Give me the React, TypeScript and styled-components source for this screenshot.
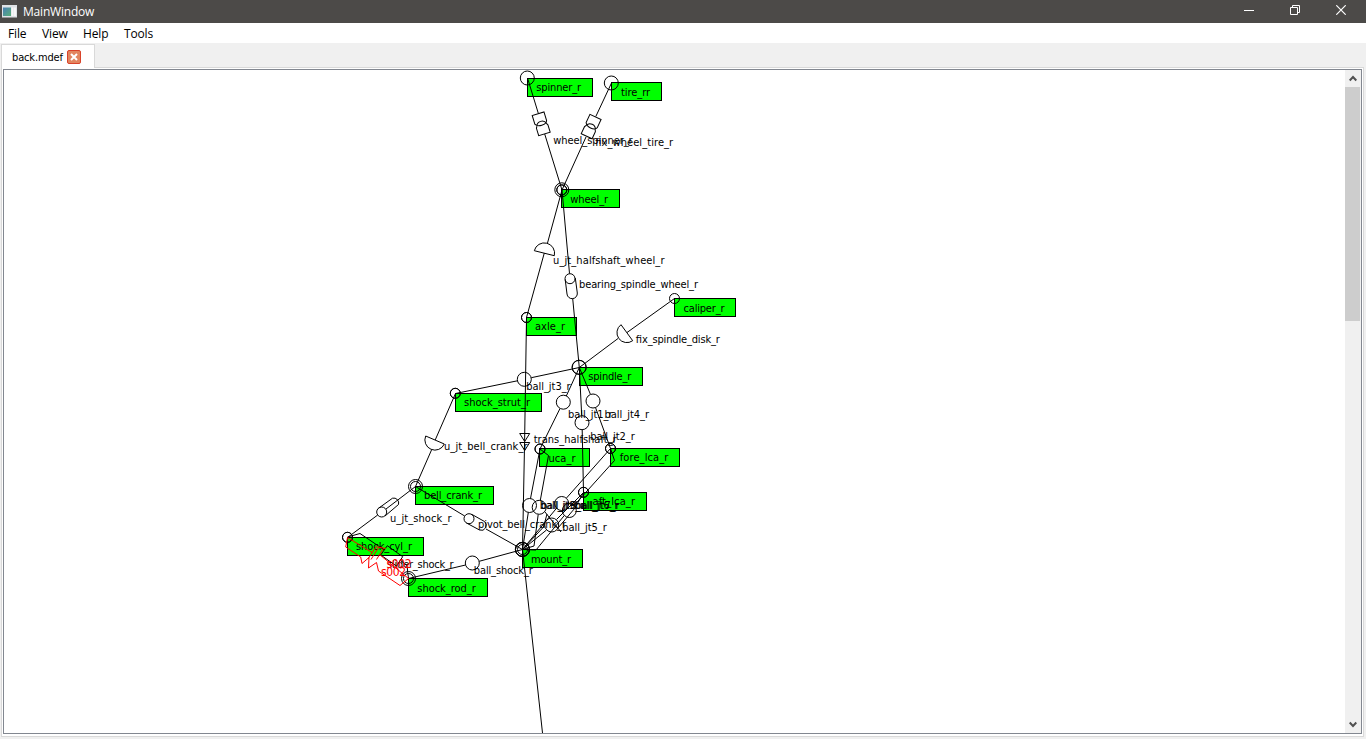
import React from "react";
import styled, { createGlobalStyle } from "styled-components";

const GlobalStyle = createGlobalStyle`
  html, body { margin: 0; padding: 0; overflow: hidden; }
  * { box-sizing: border-box; }
`;

const uiFont = `"Open Sans", "Noto Sans", sans-serif`;
const labelFont = `"DejaVu Sans Condensed", "DejaVu Sans", sans-serif`;

const Window = styled.div`
  width: 1366px;
  height: 739px;
  display: flex;
  flex-direction: column;
  background: #f0f0f0;
  color: #000;
  font-family: ${uiFont};
  font-size: 12px;
`;

const TitleBar = styled.header`
  height: 23px;
  flex: none;
  display: flex;
  align-items: center;
  background: #4c4a48;
  color: #fff;
  padding: 0 2px;
`;

const AppIcon = styled.svg`
  width: 15px;
  height: 13px;
  flex: none;
`;

const Title = styled.span`
  margin-left: 6px;
  flex: 1;
  line-height: 23px;
  letter-spacing: -0.2px;
`;

const Controls = styled.div`
  display: flex;
  height: 100%;
`;

const ControlButton = styled.button`
  width: 46px;
  height: 20px;
  padding: 0;
  border: 0;
  background: transparent;
  display: flex;
  align-items: center;
  justify-content: center;
`;

const MenuBar = styled.nav`
  height: 20px;
  flex: none;
  display: flex;
  background: #fff;
  padding-left: 8px;
`;

const MenuItem = styled.span<{ $w: number }>`
  width: ${(p) => p.$w}px;
  line-height: 21px;
  letter-spacing: -0.15px;
`;

const TabStrip = styled.div`
  height: 24px;
  flex: none;
  display: flex;
  align-items: flex-end;
  padding: 1px 0 0 1px;
`;

const Tab = styled.div`
  width: 94px;
  height: 24px;
  flex: none;
  display: flex;
  align-items: center;
  padding: 1px 0 0 10px;
  background: #fff;
  border: 1px solid #d9d9d9;
  border-bottom: 0;
  margin-bottom: -1px;
  position: relative;
  z-index: 1;
`;

const TabLabel = styled.svg`
  width: 55px;
  height: 18px;
  flex: none;
  font: 11px ${labelFont};
`;

const TabClose = styled.button`
  width: 14px;
  height: 14px;
  padding: 0;
  border: 1px solid #d9432a;
  border-radius: 2px;
  background: #e2855f;
  display: flex;
  align-items: center;
  justify-content: center;
  margin-top: -1px;
`;

const Pane = styled.section`
  flex: 1;
  margin: 0 2px 2px 1px;
  padding: 1px;
  background: #fff;
  border: 1px solid #d9d9d9;
  min-height: 0;
`;

const View = styled.div`
  height: 665px;
  border: 1px solid #828790;
  display: flex;
  background: #fff;
`;

const Diagram = styled.svg`
  flex: 1;
  min-width: 0;
  height: 663px;
  display: block;
  font: 11px ${labelFont};
  fill: none;
  stroke: #000;
  stroke-width: 1;
  text {
    fill: #000;
    stroke: none;
  }
`;

const Spring = styled.g`
  stroke: #ff0000;
  font-size: 12px;
  && text {
    fill: #ff0000;
  }
`;

const ScrollBar = styled.div`
  width: 16px;
  flex: none;
  background: #f0f0f0;
  display: flex;
  flex-direction: column;
`;

const Arrow = styled.div`
  height: 17px;
  flex: none;
  display: flex;
  align-items: center;
  justify-content: center;
`;

const Track = styled.div`
  flex: 1;
`;

const Thumb = styled.div`
  height: 234px;
  width: 15px;
  background: #cdcdcd;
`;

type Part = {
  name: string;
  x: number;
  y: number;
  w: number;
  base: number;
  tx: number;
  tw: number;
};

const parts: Part[] = [
  { name: "spinner_r", x: 527.5, y: 78.5, w: 65, base: 91, tx: 536.2, tw: 45 },
  { name: "tire_rr", x: 611.5, y: 82.5, w: 50, base: 96, tx: 621, tw: 29 },
  { name: "wheel_r", x: 561.5, y: 189.5, w: 58, base: 203, tx: 570.2, tw: 38 },
  { name: "caliper_r", x: 674.5, y: 298.5, w: 61, base: 312, tx: 683.5, tw: 41 },
  { name: "axle_r", x: 526.5, y: 317.5, w: 50, base: 330, tx: 535, tw: 30 },
  { name: "spindle_r", x: 579.5, y: 367.5, w: 63, base: 380, tx: 588.3, tw: 43 },
  { name: "shock_strut_r", x: 455.5, y: 393.5, w: 86, base: 406, tx: 464, tw: 66 },
  { name: "uca_r", x: 539.5, y: 448.5, w: 50, base: 462, tx: 548.5, tw: 27 },
  { name: "fore_lca_r", x: 610.5, y: 448.5, w: 69, base: 461, tx: 619.8, tw: 48.5 },
  { name: "aft_lca_r", x: 583.5, y: 492.5, w: 63, base: 505, tx: 592.5, tw: 42.5 },
  { name: "mount_r", x: 522.5, y: 549.5, w: 60, base: 563, tx: 531, tw: 40 },
  { name: "bell_crank_r", x: 415.5, y: 486.5, w: 78, base: 499, tx: 424, tw: 58 },
  { name: "shock_cyl_r", x: 347.5, y: 537.5, w: 76, base: 550, tx: 356, tw: 56 },
  { name: "shock_rod_r", x: 408.5, y: 578.5, w: 79, base: 592, tx: 417.3, tw: 58.5 },
];

const jointLabels: [string, number, number, number][] = [
  ["wheel_spinner_r", 553.2, 144, 79.5],
  ["fix_wheel_tire_r", 595.2, 146, 78],
  ["u_jt_halfshaft_wheel_r", 553, 264, 111.5],
  ["bearing_spindle_wheel_r", 579, 288, 119],
  ["fix_spindle_disk_r", 635.7, 343, 84],
  ["ball_jt3_r", 526.2, 390, 44.5],
  ["ball_jt1_r", 568, 418, 44.5],
  ["ball_jt4_r", 604.5, 418, 44.5],
  ["ball_jt2_r", 590.3, 440, 44.5],
  ["trans_halfshaft_r", 533.7, 443, 83],
  ["u_jt_bell_crank_r", 444, 450, 83.5],
  ["u_jt_shock_r", 390, 522, 61.5],
  ["pivot_bell_crank_r", 478, 528, 88],
  ["ball_jt5_r", 562.3, 531, 44.5],
  ["ball_jt9_r", 539.7, 509, 44.5],
  ["ball_jt8_r", 540.7, 509, 44.5],
  ["ball_jt6_r", 574.2, 509, 44.5],
  ["ball_jt7_r", 575.2, 509, 44.5],
  ["slider_shock_r", 387.2, 568, 66.5],
  ["ball_shock_r", 473.8, 574, 59],
];

const links = [
  // spinner and tire to wheel
  "M527.5 78L538.3 113.3M544.7 134L562 190",
  "M611.5 83L595.8 116.5M586 137L562 190",
  // wheel to axle, axle to mount and out of view
  "M562 190L547.5 243M544.3 253L526.5 317.5",
  "M526.5 317.5L524.6 441.5L522.5 549.5L542.5 733",
  // wheel to spindle, spindle to caliper
  "M562 190L569.5 273.5M572.7 298.5L579.3 367.5",
  "M674.5 298.5L627 332.5M618 338.5L579.3 367.5",
  // spindle to shock strut, strut to bell crank
  "M579.3 367.5L531.3 377.7M517.4 380.8L455.5 393.5",
  "M455.5 393.5L435.2 440M431.5 450L415.5 486.5",
  // spindle to control arms
  "M579.3 367.5L566.3 396M560 408.5L540 449",
  "M579.3 367.5L590.3 394M595.5 407.5L610.5 448.5",
  "M579.3 367.5L581.7 415.5M582.2 430L583.5 492.5",
  // control arms to mount
  "M540 449L530.5 498.5M528.3 512.5L522.5 549.5",
  "M540 449L548.5 455.5L540.3 500.3M538.2 514.5L534 546L522.5 549.5",
  "M610.5 448.5L566.5 498M556.7 508L522.5 549.5",
  "M610.5 448.5L614.5 460.5L574 505.5M564.3 515.5L536 550L522.5 549.5",
  "M583.5 492.5L556.5 519.5M546.5 530L522.5 549.5",
  "M583.5 492.5L575 508L558 528M545 512L561 532M547 514L543.5 527L522.5 549.5",
  // bell crank to shock and mount
  "M415.5 486.5L386 509M377.7 515L347.5 537.5",
  "M415.5 486.5L464.7 516M486 529L522.5 549.5",
  // shock rod to mount
  "M408.5 578.5L465.5 565M479.2 561.3L522.5 549.5",
];

const rings: [number, number, number][] = [
  [527.3, 78, 7],
  [611.3, 83, 7],
  [561.8, 189.8, 7],
  [561.8, 189.8, 5],
  [561.8, 190, 5],
  [674.5, 298.5, 5],
  [526.5, 317.5, 5],
  [526.5, 317.5, 5],
  [579.3, 367.3, 7],
  [579, 367.3, 7],
  [455.3, 393.3, 5],
  [455.3, 393.3, 5],
  [540, 449, 5],
  [540, 449, 5],
  [610.5, 448.5, 5],
  [610.5, 448.5, 5],
  [583.5, 492.3, 5],
  [583.5, 492.3, 5],
  [415.5, 486.5, 7],
  [415.5, 486.5, 5],
  [347.5, 537.3, 5],
  [347.5, 537.3, 5],
  [408.5, 578.5, 7],
  [408.5, 578.5, 5],
  [522.5, 549.5, 7],
  [522.3, 549.3, 7],
  [522.5, 549.5, 7],
  [522.5, 549.5, 5],
];

const balls: [number, number][] = [
  [524.3, 379.3],
  [563.3, 402.2],
  [593, 401],
  [582, 422.7],
  [529.5, 505.5],
  [539.2, 507.3],
  [561.7, 503.5],
  [569.3, 510.5],
  [551.7, 525],
  [472.3, 563],
];

const WeldJoint = ({ x, y, angle }: { x: number; y: number; angle: number }) => (
  <path
    transform={`translate(${x} ${y}) rotate(${angle})`}
    d="M-5 .2L-6.3-1.5V-10.5H6V-1.5L5 .2A6 3.2 0 0 1-5 .2ZM-5 1.2L-6 3V10.7H6V3L5 1.2A5.2 5 0 0 0-5 1.2"
  />
);

export default function App() {
  return (
    <Window>
      <GlobalStyle />
      <TitleBar>
        <AppIcon viewBox="0 0 15 13">
          <defs>
            <linearGradient id="pane" x1="0" y1="0" x2="1" y2="1">
              <stop offset="0" stopColor="#4a7fb5" />
              <stop offset="1" stopColor="#58b078" />
            </linearGradient>
          </defs>
          <rect width="15" height="12.5" fill="#dfe3e6" />
          <rect x="1" y="2.5" width="8" height="8.5" fill="url(#pane)" />
          <rect x="9.5" y="2.5" width="2" height="8.5" fill="#f8f8f8" />
          <rect x="12" y="2.5" width="2" height="8.5" fill="#f8f8f8" />
        </AppIcon>
        <Title>MainWindow</Title>
        <Controls>
          <ControlButton aria-label="Minimize">
            <svg width="10" height="10">
              <path d="M0 5.5H10" stroke="#fff" />
            </svg>
          </ControlButton>
          <ControlButton aria-label="Restore">
            <svg width="10" height="10" fill="none" stroke="#fff">
              <path d="M.5 2.5H7.5V9.5H.5ZM2.5 2.5V.5H9.5V7.5H7.5" />
            </svg>
          </ControlButton>
          <ControlButton aria-label="Close">
            <svg width="10" height="10">
              <path d="M.3 .3L9.7 9.7M9.7 .3L.3 9.7" stroke="#fff" strokeWidth="1.2" />
            </svg>
          </ControlButton>
        </Controls>
      </TitleBar>
      <MenuBar>
        <MenuItem $w={34}>File</MenuItem>
        <MenuItem $w={41}>View</MenuItem>
        <MenuItem $w={41}>Help</MenuItem>
        <MenuItem $w={41}>Tools</MenuItem>
      </MenuBar>
      <TabStrip>
        <Tab>
          <TabLabel>
            <text x="0" y="13" textLength="51">
              back.mdef
            </text>
          </TabLabel>
          <TabClose aria-label="Close tab">
            <svg width="8" height="8">
              <path d="M1 1L7 7M7 1L1 7" stroke="#fff" strokeWidth="2" />
            </svg>
          </TabClose>
        </Tab>
      </TabStrip>
      <Pane>
        <View>
          <Diagram viewBox="4 70 1341 663">
            {parts.map((p) => (
              <rect key={p.name} x={p.x} y={p.y} width={p.w} height={18} fill="#00ff00" />
            ))}
            {links.map((d) => (
              <path key={d} d={d} />
            ))}
            {rings.map(([x, y, r], i) => (
              <circle key={i} cx={x} cy={y} r={r} />
            ))}
            {balls.map(([x, y], i) => (
              <circle key={i} cx={x} cy={y} r={7} />
            ))}

            <WeldJoint x={541.3} y={123.7} angle={-17} />
            <WeldJoint x={591.2} y={126.5} angle={25} />

            {/* universal and fixed joints */}
            <path d="M534.3 250.7A9.5 9.5 0 0 1 554.3 255.7Z" />
            <path d="M621 324.7A9.5 9.5 0 0 0 632.7 340.7Z" />
            <path d="M425.7 436A9.5 9.5 0 0 0 444.3 444Z" />

            {/* revolute joints */}
            <circle cx="570" cy="278.7" r="5" />
            <path d="M565.2 279.5L567 294A5 5 0 0 0 577.3 293L575.3 278" />
            <circle cx="381.7" cy="512" r="5" />
            <path d="M378.5 508.3L392.5 498.2A5 5 0 0 1 398.5 504.5L385 516" />
            <circle cx="469" cy="518.7" r="5" />
            <path d="M471.7 514.3L484.5 521.5A5 5 0 0 1 479.5 530L466.5 523" />

            {/* translational joint */}
            <path d="M519.7 433.5H529.7L524.7 441.5ZM519.7 442.5H529.7L524.7 450.5Z" />

            {/* slider between shock cylinder and rod */}
            <path d="M347.5 537L360 533.5L383.3 549.3M380.7 555L387.3 545.7L402.7 556.7L396.5 566M380.7 555L396.5 566M400 560L407 565.5L408.5 578.5" />

            {parts.map((p) => (
              <text key={p.name} x={p.tx} y={p.base} textLength={p.tw}>
                {p.name}
              </text>
            ))}
            {jointLabels.map(([name, x, y, w]) => (
              <text key={name} x={x} y={y} textLength={w}>
                {name}
              </text>
            ))}

            <Spring>
              <path d="M347.5 537.5L372 552.5M379 547L371 559.5M386 548.5L376 546.7L368 559M383 549L376.5 559.5M379.5 554.5L408.5 578.5" />
              <path d="M347.5 537.5L345.7 547L360.7 557L362 563.5L369 557.5L368.5 568L376.5 562.5L378.5 571L400 585.5L408.5 578.5" />
              <text x="386.5" y="568" textLength="25">
                s002
              </text>
              <text x="381" y="576" textLength="25">
                s002
              </text>
            </Spring>
          </Diagram>
          <ScrollBar>
            <Arrow>
              <svg width="8" height="7">
                <path d="M.7 5.5L4 2L7.3 5.5" fill="none" stroke="#505050" strokeWidth="2" />
              </svg>
            </Arrow>
            <Track>
              <Thumb />
            </Track>
            <Arrow>
              <svg width="8" height="7">
                <path d="M.7 1.5L4 5L7.3 1.5" fill="none" stroke="#505050" strokeWidth="2" />
              </svg>
            </Arrow>
          </ScrollBar>
        </View>
      </Pane>
    </Window>
  );
}
